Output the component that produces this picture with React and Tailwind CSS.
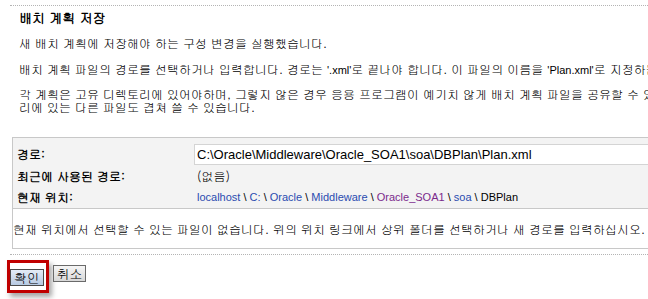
import React from 'react';

const kr = "font-['Gulim','Noto_Sans_CJK_KR',sans-serif]";
const lat = "font-['Liberation_Sans','Noto_Sans_CJK_KR',sans-serif]";

const Crumb = ({ children, color = 'text-[#2a4bb0]' }) => (
  <span className={color}>{children}</span>
);

const Sep = () => <span className="text-black"> \ </span>;

const App = () => {
  return (
    <div className={`w-[648px] h-[299px] overflow-hidden bg-white text-black ${kr}`}>
      <div className="pt-[5px]">
        <div className="ml-[10px] border-t border-dotted border-[#b4b4b4]" />
      </div>

      <div className="pl-[19px] text-[12px] whitespace-nowrap">
        <div className="h-[24px] leading-[24px] text-[13px] font-bold">배치 계획 저장</div>
        <div className="h-[26px] leading-[26px]">새 배치 계획에 저장해야 하는 구성 변경을 실행했습니다.</div>
        <div className="h-[26px] leading-[26px]">
          배치 계획 파일의 경로를 선택하거나 입력합니다. 경로는 <span className={`${lat} text-[11px]`}>'.xml'</span>로 끝나야 합니다. 이 파일의 이름을 <span className={`${lat} text-[11px]`}>'Plan.xml'</span>로 지정하는 것이 좋습니다.
        </div>
        <div className="pt-[5px] leading-[13px]">
          <div>각 계획은 고유 디렉토리에 있어야하며, 그렇지 않은 경우 응용 프로그램이 예기치 않게 배치 계획 파일을 공유할 수 있습니다. 이 경우 같은 디렉토</div>
          <div>리에 있는 다른 파일도 겹쳐 쓸 수 있습니다.</div>
        </div>
      </div>

      <div className="ml-[12px] mt-[24px] w-[700px] border border-[#c8c8c8] text-[12px]">
        <div className="bg-[#f3f3f3] pt-[5px] pb-[1px] border-b border-[#c8c8c8]">
          <div className="flex items-center h-[22px]">
            <div className="w-[181px] pl-[4px] font-bold">경로:</div>
            <div className={`flex-1 h-[21px] border border-[#d4d4d4] bg-white pl-[2px] leading-[19px] text-[13px] ${lat}`}>
              C:\Oracle\Middleware\Oracle_SOA1\soa\DBPlan\Plan.xml
            </div>
          </div>
          <div className="flex items-center h-[22px]">
            <div className="w-[181px] pl-[4px] font-bold">최근에 사용된 경로:</div>
            <div className="pl-[3px]">(없음)</div>
          </div>
          <div className="flex items-center h-[20px]">
            <div className="w-[181px] pl-[4px] font-bold">현재 위치:</div>
            <div className={`pl-[3px] text-[11px] whitespace-pre ${lat}`}>
              <Crumb>localhost</Crumb><Sep /><Crumb>C:</Crumb><Sep /><Crumb>Oracle</Crumb><Sep /><Crumb>Middleware</Crumb><Sep />
              <Crumb color="text-[#7b2a8c]">Oracle_SOA1</Crumb><Sep /><Crumb>soa</Crumb><Sep /><span>DBPlan</span>
            </div>
          </div>
        </div>
        <div className="h-[39px] pt-[13px] leading-[14px] whitespace-nowrap">
          현재 위치에서 선택할 수 있는 파일이 없습니다. 위의 위치 링크에서 상위 폴더를 선택하거나 새 경로를 입력하십시오.
        </div>
      </div>

      <div className="mt-[5px] ml-[10px] border-t border-dotted border-[#b4b4b4]" />

      <div className="flex items-start mt-[5px] ml-[7px]">
        <div className="border-[3px] border-[#c00000] pt-[2px] pb-[1px] pr-[2px] shadow-[3px_4px_5px_rgba(0,0,0,0.35)]">
          <button className="h-[17px] w-[34px] border border-[#4a4a4a] bg-gradient-to-b from-[#e4ecf6] to-[#b6c9e2] text-[13px] leading-[15px]">
            확인
          </button>
        </div>
        <button className="ml-[4px] mt-[5px] h-[17px] w-[33px] border border-[#6a6a6a] bg-gradient-to-b from-[#f6f6f6] to-[#d8d8d8] text-[13px] leading-[15px]">
          취소
        </button>
      </div>
    </div>
  );
};

export default App;
